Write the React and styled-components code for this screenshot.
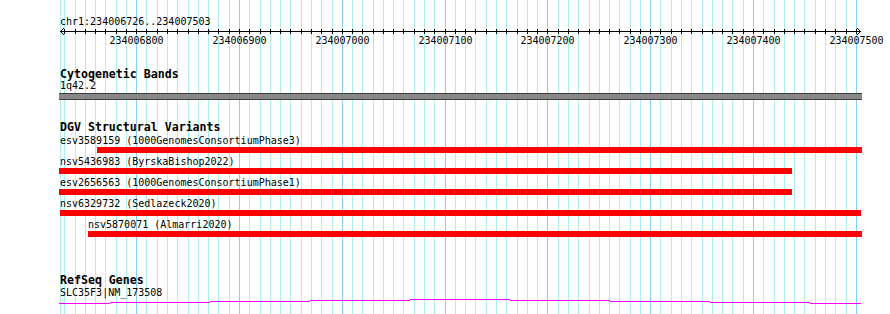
import styled, { createGlobalStyle } from "styled-components";

const GlobalStyle = createGlobalStyle`
  html, body {
    margin: 0;
    padding: 0;
    background: #fff;
  }
  body {
    font-family: "DejaVu Sans Mono", "Liberation Mono", monospace;
    color: #000;
  }
`;

// view: chr1:234006726..234007503, ~1.028 px per bp
const bpToX = (bp) => Math.floor(136.7 + (bp - 234006800) * 1.028);

const minorTicks = [];
for (let bp = 234006730; bp <= 234007500; bp += 10) minorTicks.push(bp);
const majorTicks = minorTicks.filter((bp) => bp % 100 === 0);

const variants = [
  { name: "esv3589159 (1000GenomesConsortiumPhase3)", labelX: 1, left: 38, width: 765 },
  { name: "nsv5436983 (ByrskaBishop2022)", labelX: 1, left: 0, width: 733 },
  { name: "esv2656563 (1000GenomesConsortiumPhase1)", labelX: 1, left: 0, width: 733 },
  { name: "nsv6329732 (Sedlazeck2020)", labelX: 1, left: 1, width: 801 },
  { name: "nsv5870071 (Almarri2020)", labelX: 29, left: 29, width: 774 },
];

// intron line of SLC35F3, drawn as a flat hat
const geneSteps = [
  [59, 110, 303],
  [110, 210, 302],
  [210, 310, 301],
  [310, 410, 300],
  [410, 510, 299],
  [510, 610, 300],
  [610, 710, 301],
  [710, 810, 302],
  [810, 861, 303],
];

const Browser = styled.div`
  position: relative;
  width: 890px;
  height: 314px;
  overflow: hidden;
  background: #fff;
`;

const GridLayer = styled.svg`
  position: absolute;
  top: 0;
  left: 0;
  width: 890px;
  height: 314px;
  z-index: 0;
`;

const Tracks = styled.div`
  position: relative;
  z-index: 1;
  display: flex;
  flex-direction: column;
  width: 803px;
  margin-left: 59px;
`;

const Location = styled.div`
  margin: 16px 0 0 1px;
  font-size: 10px;
  line-height: 11px;
  height: 11px;
  white-space: nowrap;
`;

const RulerSvg = styled.svg`
  display: block;
  width: 803px;
  height: 20px;
  overflow: visible;
`;

const Track = styled.section`
  display: flex;
  flex-direction: column;
  margin-top: ${(p) => p.$gap}px;
`;

const TrackTitle = styled.h2`
  margin: 0;
  padding-left: 1px;
  font-family: "DejaVu Sans Mono", monospace;
  font-weight: bold;
  font-size: 11.6px;
  line-height: 12px;
  height: 12px;
  white-space: nowrap;
`;

const FeatureLabel = styled.div`
  margin: ${(p) => p.$top || 0}px 0 0 ${(p) => p.$indent || 1}px;
  font-size: 10px;
  line-height: 11px;
  height: 11px;
  white-space: nowrap;
`;

const Band = styled.div`
  margin-top: 2px;
  height: 5px;
  background: #888;
  border-top: 1px solid #3c3c3c;
  border-bottom: 1px solid #3c3c3c;
`;

const VariantList = styled.div`
  display: flex;
  flex-direction: column;
  margin-top: 2px;
`;

const VariantRow = styled.div`
  display: flex;
  flex-direction: column;
  padding-bottom: 3px;
`;

const VariantBar = styled.div`
  margin: 1px 0 0 ${(p) => p.$left}px;
  width: ${(p) => p.$width}px;
  height: 6px;
  background: #ff0000;
`;

const GeneSvg = styled.svg`
  display: block;
  width: 803px;
  height: 8px;
`;

export default function App() {
  return (
    <>
      <GlobalStyle />
      <Browser>
        <GridLayer viewBox="0 0 890 314" shapeRendering="crispEdges">
          <rect x="60" y="0" width="1" height="314" fill="#afeeee" />
          {minorTicks.map((bp) => (
            <rect
              key={bp}
              x={bpToX(bp)}
              y="0"
              width="1"
              height="314"
              fill={bp % 100 === 0 ? "#87cefa" : "#afeeee"}
            />
          ))}
        </GridLayer>

        <Tracks>
          <Location>chr1:234006726..234007503</Location>
          <RulerSvg viewBox="59 27 803 20" shapeRendering="crispEdges">
            <line x1="60" y1="31.5" x2="861" y2="31.5" stroke="#000" />
            {minorTicks.map((bp) => (
              <line
                key={bp}
                x1={bpToX(bp) + 0.5}
                y1="29"
                x2={bpToX(bp) + 0.5}
                y2="34"
                stroke="#000"
              />
            ))}
            <polyline points="64,28 60.5,31.5 64,35" fill="none" stroke="#000" shapeRendering="auto" />
            <polyline points="857,28 860.5,31.5 857,35" fill="none" stroke="#000" shapeRendering="auto" />
            {majorTicks.map((bp) => (
              <text
                key={bp}
                x={bpToX(bp) + 0.5}
                y="44"
                textAnchor="middle"
                fontFamily="DejaVu Sans Mono, monospace"
                fontSize="10"
                fill="#000"
              >
                {bp}
              </text>
            ))}
          </RulerSvg>

          <Track $gap={21}>
            <TrackTitle>Cytogenetic Bands</TrackTitle>
            <FeatureLabel>1q42.2</FeatureLabel>
            <Band />
          </Track>

          <Track $gap={21}>
            <TrackTitle>DGV Structural Variants</TrackTitle>
            <VariantList>
              {variants.map((v) => (
                <VariantRow key={v.name}>
                  <FeatureLabel $indent={v.labelX}>{v.name}</FeatureLabel>
                  <VariantBar $left={v.left} $width={v.width} />
                </VariantRow>
              ))}
            </VariantList>
          </Track>

          <Track $gap={34}>
            <TrackTitle>RefSeq Genes</TrackTitle>
            <FeatureLabel $top={1}>SLC35F3|NM_173508</FeatureLabel>
            <GeneSvg viewBox="59 298 803 8" shapeRendering="crispEdges">
              {geneSteps.map(([x1, x2, y]) => (
                <line key={x1} x1={x1} y1={y + 0.5} x2={x2} y2={y + 0.5} stroke="#ff00ff" />
              ))}
            </GeneSvg>
          </Track>
        </Tracks>
      </Browser>
    </>
  );
}
